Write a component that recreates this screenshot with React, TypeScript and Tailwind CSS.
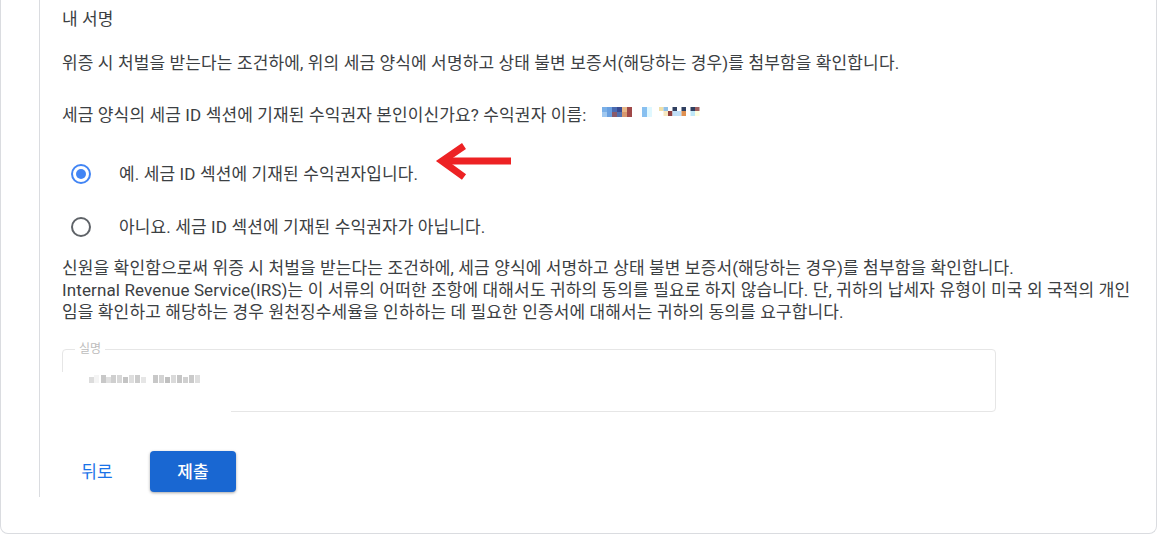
import React from "react";

const font = { fontFamily: "Roboto, 'Noto Sans CJK KR', 'Noto Sans', sans-serif" };

function NameBlur() {
  const r1 = ["#7ab0e8", "#6aa0e0", "#4a6ab0", "#3a4a90", "#e8b888", "#a04848"];
  const r2 = ["#a0c8f0", "#6aa0e0", "#8a5a6a", "#5070b0", "#d89870", "#a04848"];
  const c3a = ["#f0e0a8", "#90c0e8", "#ffffff", "#304060", "#ffffff", "#304060", "#ffffff", "#304060", "#a06060"];
  const c3b = ["#ffffff", "#f8e8c0", "#904040", "#c0e0f8", "#c0e0f8", "#e09050", "#ffffff", "#c0e8f8", "#ffffe0"];
  return (
    <svg width="100" height="12" viewBox="0 0 100 12" className="inline-block ml-[16px] -mt-[8px] align-middle">
      {r1.map((c, i) => (
        <rect key={"a" + i} x={i * 5} y={0} width={5} height={5} fill={c} />
      ))}
      {r2.map((c, i) => (
        <rect key={"b" + i} x={i * 5} y={5} width={5} height={5} fill={c} />
      ))}
      <rect x={40} y={0} width={5} height={10} fill="#88c0f0" />
      <rect x={45} y={0} width={5} height={10} fill="#e0f8ff" />
      {c3a.map((c, i) => (
        <rect key={"c" + i} x={57 + i * 4.5} y={0} width={4.5} height={4} fill={c} />
      ))}
      {c3b.map((c, i) => (
        <rect key={"d" + i} x={57 + i * 4.5} y={4} width={4.5} height={5} fill={c} />
      ))}
    </svg>
  );
}

function ValueBlur() {
  const cells = [
    [0, "#dcdcdc"], [5, "#f4f4f4"], [12, "#c8c8c8"], [17, "#e0e0e0"], [22, "#cfcfcf"], [28, "#d8d8d8"],
    [34, "#c4c4c4"], [40, "#dedede"], [46, "#cccccc"], [52, "#e6e6e6"], [64, "#c8c8c8"], [70, "#d4d4d4"],
    [76, "#c0c0c0"], [82, "#dadada"], [88, "#c6c6c6"], [94, "#d0d0d0"], [100, "#cacaca"], [106, "#dedede"],
  ] as const;
  return (
    <svg width="112" height="8" viewBox="0 0 112 8">
      {cells.map(([x, c], i) => (
        <rect key={i} x={x} y={i % 3 === 0 ? 2 : 0} width={5} height={i % 3 === 0 ? 6 : 8} fill={c} />
      ))}
    </svg>
  );
}

function Radio({ checked }: { checked: boolean }) {
  return (
    <div
      className={
        "w-[20px] h-[20px] rounded-full border-2 flex items-center justify-center " +
        (checked ? "border-[#4285f4]" : "border-[#5f6368]")
      }
    >
      {checked && <div className="w-[10px] h-[10px] rounded-full bg-[#4285f4]" />}
    </div>
  );
}

export default function App() {
  return (
    <div className="w-[1176px] h-[534px] bg-white overflow-hidden relative" style={font}>
      <div className="w-[1157px] h-[534px] border-x border-b border-[#dadce0] rounded-b-[8px] bg-white">
        <div className="ml-[38px] border-l border-[#dadce0] pl-[22px] pr-[18px] pb-[5px] text-[17px] leading-[22px] tracking-[0.12px] text-[#3c4043]">
          <div className="pt-[8px]">내 서명</div>
          <div className="mt-[22px]">
            위증 시 처벌을 받는다는 조건하에, 위의 세금 양식에 서명하고 상태 불변 보증서(해당하는 경우)를 첨부함을 확인합니다.
          </div>
          <div className="mt-[30px] relative">
            세금 양식의 세금 ID 섹션에 기재된 수익권자 본인이신가요? 수익권자 이름:
            <NameBlur />
          </div>
          <div className="mt-[24px] h-[48px] flex items-center relative">
            <div className="w-[38px] flex justify-center">
              <Radio checked />
            </div>
            <span className="ml-[19px]">예. 세금 ID 섹션에 기재된 수익권자입니다.</span>
            <svg
              className="absolute left-[372px] top-[-8px]"
              width="80"
              height="40"
              viewBox="0 0 80 40"
            >
              <path d="M77 19 H12" stroke="#ed2224" strokeWidth="7" fill="none" />
              <path d="M30 4 L8 19 L30 35" stroke="#ed2224" strokeWidth="7" fill="none" strokeLinejoin="miter" />
            </svg>
          </div>
          <div className="mt-[5px] h-[48px] flex items-center">
            <div className="w-[38px] flex justify-center">
              <Radio checked={false} />
            </div>
            <span className="ml-[19px]">아니요. 세금 ID 섹션에 기재된 수익권자가 아닙니다.</span>
          </div>
          <div className="mt-[6px]">
            신원을 확인함으로써 위증 시 처벌을 받는다는 조건하에, 세금 양식에 서명하고 상태 불변 보증서(해당하는 경우)를 첨부함을 확인합니다.
            <br />
            Internal Revenue Service(IRS)는 이 서류의 어떠한 조항에 대해서도 귀하의 동의를 필요로 하지 않습니다. 단, 귀하의 납세자 유형이 미국 외 국적의 개인임을 확인하고 해당하는 경우 원천징수세율을 인하하는 데 필요한 인증서에 대해서는 귀하의 동의를 요구합니다.
          </div>
          <div className="mt-[26px] w-[934px] h-[63px] relative border border-[#e6e6e6] rounded-[4px]">
            <span className="absolute left-[12px] top-[-10px] px-[4px] bg-white text-[12px] leading-[18px] tracking-normal text-[#bdbdbd]">
              실명
            </span>
            <div className="absolute left-[26px] top-[25px]">
              <ValueBlur />
            </div>
            <div className="absolute left-[-2px] top-[22px] w-[5px] h-[43px] bg-white" />
            <div className="absolute left-[-2px] bottom-[-2px] w-[170px] h-[4px] bg-white" />
          </div>
          <div className="mt-[39px] flex items-center">
            <button className="w-[62px] h-[41px] ml-[4px] text-[17px] text-[#1a73e8]">뒤로</button>
            <button className="ml-[22px] w-[86px] h-[41px] rounded-[4px] bg-[#1967d2] text-white text-[17px] font-medium shadow-[0_1px_3px_rgba(0,0,0,0.35)]">
              제출
            </button>
          </div>
        </div>
      </div>
    </div>
  );
}
